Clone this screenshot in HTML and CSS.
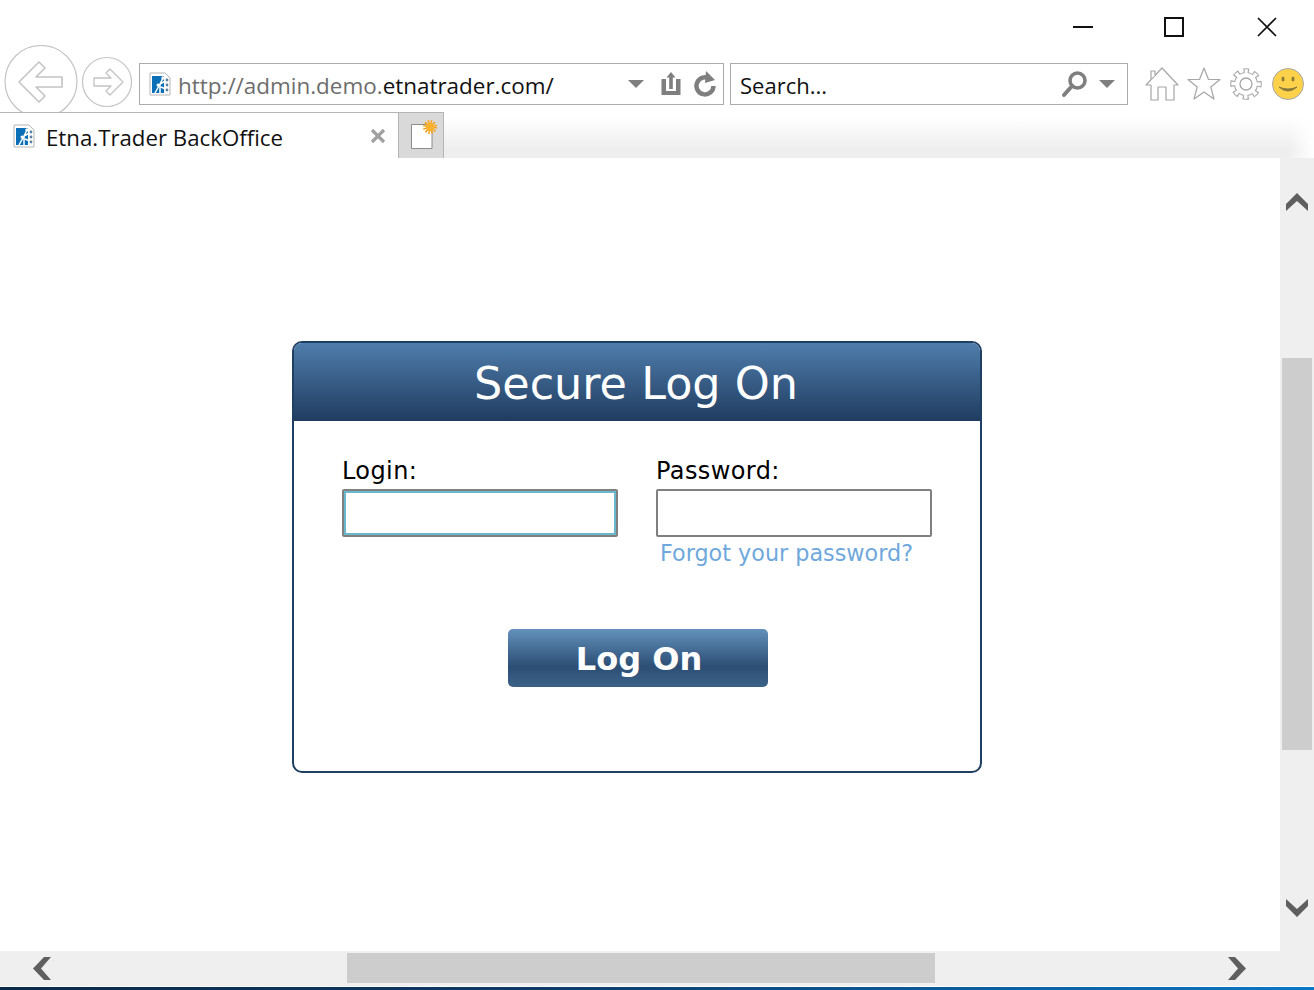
FILE: index.html
```html
<!DOCTYPE html>
<html lang="en">
<head>
<meta charset="UTF-8">
<title>Etna.Trader BackOffice</title>
<link rel="stylesheet" href="styles.css">
</head>
<body>
<svg class="defs" width="0" height="0">
  <symbol id="favicon" viewBox="0 0 22 24">
    <path d="M1 1H16L21 6V23H1Z" fill="#fff" stroke="#b5b5b5"/>
    <rect x="3" y="4" width="12" height="17" fill="#0b6fb8"/>
    <path d="M6 21L11 12L14 6M11 21L11 12L18 8M12 15L19 18" stroke="#fff" stroke-width="1.500" fill="none"/>
    <circle cx="14" cy="6" r="1.700" fill="#fff"/>
    <circle cx="9" cy="13" r="1.500" fill="#fff"/>
    <circle cx="18" cy="8" r="1.400" fill="#5a7f9f"/>
    <circle cx="18" cy="13" r="1.400" fill="#5a7f9f"/>
    <circle cx="18" cy="18" r="1.400" fill="#5a7f9f"/>
  </symbol>
</svg>

<!-- window buttons -->
<div class="titlebar">
  <svg class="win-btn win-min" width="20" height="20" viewBox="0 0 20 20"><path d="M0 10H20" stroke="#111" stroke-width="2"/></svg>
  <svg class="win-btn" width="20" height="20" viewBox="0 0 20 20"><rect x="1" y="1" width="18" height="18" fill="none" stroke="#111" stroke-width="2"/></svg>
  <svg class="win-btn" width="20" height="20" viewBox="0 0 20 20"><path d="M1 1L19 19M19 1L1 19" stroke="#111" stroke-width="1.7"/></svg>
</div>

<!-- browser toolbar -->
<div class="navbar">
  <svg class="back" width="74" height="74" viewBox="0 0 74 74">
    <circle cx="37" cy="36.500" r="36" fill="#fff" stroke="#c4c4c4" stroke-width="1.2"/>
    <path d="M15 37L35 17L41 23L32 32H58V42H32L41 51L35 57Z" fill="#fff" stroke="#c4c4c4" stroke-width="1.6" stroke-linejoin="round"/>
  </svg>
  <svg class="forward" width="52" height="52" viewBox="0 0 52 52">
    <circle cx="26" cy="26" r="24.5" fill="#fff" stroke="#c4c4c4" stroke-width="1.2"/>
    <path d="M13 22H30L25 17L29 13L42 26L29 39L25 35L30 30H13Z" fill="#fff" stroke="#c4c4c4" stroke-width="1.4" stroke-linejoin="round"/>
  </svg>
  <div class="address">
    <svg class="favicon" width="22" height="24"><use href="#favicon"/></svg>
    <span class="url"><span class="url-dim">http://admin.demo.</span>etnatrader.com/</span>
    <span class="caret caret-address"></span>
    <svg class="tool-share" width="20" height="24" viewBox="0 0 20 24">
      <path d="M10 0L14.500 5.500H11.800V17H8.200V5.500H5.500Z" fill="#7f7f7f"/>
      <path d="M0.500 7H5V19H15V7H19.500V23H0.500Z" fill="#7f7f7f"/>
    </svg>
    <svg class="tool-refresh" width="24" height="26" viewBox="0 0 24 26">
      <path d="M17 8A8.500 8.500 0 1 0 20.500 15" fill="none" stroke="#7f7f7f" stroke-width="4.500"/>
      <path d="M13 0L22 9L12 12Z" fill="#7f7f7f"/>
    </svg>
  </div>
  <div class="search">
    <span class="search-text">Search...</span>
    <svg class="search-icon" width="28" height="28" viewBox="0 0 28 28">
      <circle cx="16.500" cy="10.500" r="7.500" fill="none" stroke="#7f7f7f" stroke-width="3.600"/>
      <path d="M11 16L3 25" stroke="#7f7f7f" stroke-width="4" stroke-linecap="round"/>
    </svg>
    <span class="caret"></span>
  </div>
  <div class="tools">
    <svg class="tool-home" width="34" height="34" viewBox="0 0 34 34">
      <path d="M1 18L17 1L33 18L29 18V33H21V20H13V33H6V18Z" fill="#fff" stroke="#a6a6a6" stroke-width="1.200" stroke-linejoin="round"/>
      <path d="M6 12V4H10V8" fill="#fff" stroke="#a6a6a6" stroke-width="1.200"/>
    </svg>
    <svg class="tool-star" width="34" height="34" viewBox="0 0 34 34">
      <path d="M17 1L21.500 12.500H33L23.800 20L27 32L17 25L7 32L10.200 20L1 12.500H12.500Z" fill="#fff" stroke="#a6a6a6" stroke-width="1.200" stroke-linejoin="round"/>
    </svg>
    <svg class="tool-gear" width="32" height="32" viewBox="0 0 32 32">
      <circle cx="16" cy="16" r="12" fill="none" stroke="#a6a6a6" stroke-width="7.500" stroke-dasharray="5.400 4.025" stroke-dashoffset="2.700" transform="rotate(-90 16 16)"/>
      <circle cx="16" cy="16" r="11.500" fill="#fff" stroke="#a6a6a6" stroke-width="1.100"/>
      <circle cx="16" cy="16" r="12" fill="none" stroke="#fff" stroke-width="5.400" stroke-dasharray="3.400 6.025" stroke-dashoffset="1.700" transform="rotate(-90 16 16)"/>
      <circle cx="16" cy="16" r="6" fill="#fff" stroke="#a6a6a6" stroke-width="1.300"/>
    </svg>
    <svg class="tool-smile" width="32" height="32" viewBox="0 0 32 32">
      <circle cx="16" cy="16" r="15.500" fill="#fdd14a" stroke="#a8a8a8"/>
      <ellipse cx="11" cy="11" rx="1.500" ry="2.500" fill="#8a7a3a"/>
      <ellipse cx="21" cy="11" rx="1.500" ry="2.500" fill="#8a7a3a"/>
      <path d="M7 19Q16 27 25 19Q16 23 7 19Z" fill="#8a7a3a" stroke="#8a7a3a"/>
    </svg>
  </div>
</div>

<!-- tab strip -->
<div class="tabstrip">
  <div class="tab">
    <svg class="favicon" width="22" height="24"><use href="#favicon"/></svg>
    <span class="tab-title">Etna.Trader BackOffice</span>
    <svg class="tab-close" width="16" height="16" viewBox="0 0 16 16"><path d="M2 2L14 14M14 2L2 14" stroke="#a0a0a0" stroke-width="3.200"/></svg>
  </div>
  <div class="newtab">
    <svg class="newtab-icon" width="28" height="32" viewBox="0 0 28 32">
      <path d="M2.500 4.500H23V28.500H2.500Z" fill="#fff" stroke="#8c8c8c"/>
      <circle cx="21" cy="7" r="5.500" fill="none" stroke="#f9a11b" stroke-width="3" stroke-dasharray="1.440 1.440"/>
      <circle cx="21" cy="7" r="4.500" fill="#fbb12e"/>
    </svg>
  </div>
  <div class="tab-fill"></div>
</div>

<div class="viewport">
  <div class="page">
    <div class="logon">
      <div class="logon-head">Secure Log On</div>
      <form class="logon-body">
        <div class="fields">
          <div class="field">
            <label for="login">Login:</label>
            <input type="text" id="login" class="text-input text-input-focus">
          </div>
          <div class="field">
            <label for="password">Password:</label>
            <input type="password" id="password" class="text-input">
            <a class="forgot" href="#">Forgot your password?</a>
          </div>
        </div>
        <div class="actions">
          <input type="button" class="logon-btn" value="Log On">
        </div>
      </form>
    </div>
  </div>
  <div class="vscroll">
    <svg class="arrow-up" width="24" height="18" viewBox="0 0 24 18"><path d="M1 18V11L12 0L23 11V18L12 8Z" fill="#5f5f5f"/></svg>
    <div class="vthumb"></div>
    <svg class="arrow-down" width="24" height="18" viewBox="0 0 24 18"><path d="M1 0V7L12 18L23 7V0L12 10Z" fill="#5f5f5f"/></svg>
  </div>
</div>

<div class="hscroll">
  <svg class="arrow-left" width="18" height="23" viewBox="0 0 18 23"><path d="M18 0H11L0 11.500L11 23H18L8 11.500Z" fill="#5f5f5f"/></svg>
  <div class="hthumb"></div>
  <svg class="arrow-right" width="18" height="23" viewBox="0 0 18 23"><path d="M0 0H7L18 11.500L7 23H0L10 11.500Z" fill="#5f5f5f"/></svg>
</div>
<div class="taskbar-edge"></div>
</body>
</html>
```

FILE: styles.css
```css
html, body {
    margin: 0;
    padding: 0;
    height: 990px;
    overflow: hidden;
    background-color: #fff;
    font-family: "Open Sans", "Noto Sans", sans-serif;
}

.defs {
    display: block;
    height: 0;
}

/* Window buttons */
.titlebar {
    height: 45px;
    box-sizing: border-box;
    padding: 17px 37px 0 0;
    display: flex;
    justify-content: flex-end;
    gap: 73px;
}

.win-btn {
    display: block;
}

.win-min {
    margin-right: -2px;
}

/* Toolbar */
.navbar {
    height: 67px;
    display: flex;
    align-items: flex-start;
    overflow: hidden;
    box-sizing: border-box;
}

.back {
    flex: none;
    margin-left: 4px;
}

.forward {
    flex: none;
    margin: 11px 0 0 3px;
}

.address,
.search {
    height: 42px;
    margin-top: 18px;
    box-sizing: border-box;
    border: 1px solid #ababab;
    display: flex;
    align-items: center;
    flex: none;
    background-color: #fff;
}

.address {
    width: 585px;
    margin-left: 6px;
    padding-left: 9px;
}

.search {
    width: 398px;
    margin-left: 6px;
    padding-left: 9px;
}

.url {
    font-size: 22.450px;
    margin: 2px 0 0 7px;
    color: #111;
    white-space: nowrap;
    flex: 1;
}

.url-dim {
    color: #6d6d6d;
}

.caret {
    width: 0;
    height: 0;
    border-left: 8px solid transparent;
    border-right: 8px solid transparent;
    border-top: 8px solid #7f7f7f;
    flex: none;
}

.caret-address {
    margin-right: 17px;
}

.tool-share {
    flex: none;
    margin-right: 12px;
}

.tool-refresh {
    flex: none;
    margin-right: 6px;
}

.search-text {
    font-size: 22px;
    margin-top: 2px;
    color: #111;
    flex: 1;
}

.search-icon {
    flex: none;
    margin-right: 10px;
}

.search .caret {
    margin-right: 12px;
}

.tools {
    display: flex;
    align-items: center;
    margin: 22px 0 0 17px;
}

.tools svg {
    flex: none;
    display: block;
}

.tool-star {
    margin-left: 8px;
}

.tool-gear {
    margin-left: 9px;
}

.tool-smile {
    margin-left: 10px;
}

/* Tabs */
.tabstrip {
    height: 46px;
    display: flex;
    box-sizing: border-box;
}

.tab {
    width: 398px;
    box-sizing: border-box;
    border-top: 1px solid #b5b5b5;
    display: flex;
    align-items: center;
    padding: 0 12px 0 13px;
    flex: none;
}

.tab-title {
    font-size: 22.250px;
    margin-top: 4px;
    color: #111;
    margin-left: 11px;
    flex: 1;
    white-space: nowrap;
}

.tab-close {
    flex: none;
}

.newtab {
    width: 46px;
    box-sizing: border-box;
    flex: none;
    background-color: #d9d9d9;
    border: 1px solid #b5b5b5;
    border-bottom: none;
    padding: 7px 0 0 10px;
}

.newtab-icon {
    display: block;
}

.tab-fill {
    flex: 1;
    background: linear-gradient(to bottom, #fff 0, #fff 10%, #eee 80%, #efefef 100%);
    -webkit-mask-image: linear-gradient(to right, #000 97%, transparent 100%);
    mask-image: linear-gradient(to right, #000 97%, transparent 100%);
}

/* Page area */
.viewport {
    height: 793px;
    display: flex;
}

.page {
    flex: 1;
    box-sizing: border-box;
    padding: 183px 0 0 292px;
}

.logon {
    width: 690px;
    height: 432px;
    box-sizing: border-box;
    border: 2px solid #1f3f63;
    border-radius: 10px;
    overflow: hidden;
    font-family: "DejaVu Sans", Verdana, sans-serif;
}

.logon-head {
    height: 78px;
    line-height: 82px;
    padding-right: 2px;
    text-align: center;
    color: #fff;
    font-size: 44.500px;
    background: linear-gradient(to bottom, #4f7dab 0%, #1f3c60 100%);
}

.logon-body {
    padding: 33px 48px 0;
}

.fields {
    display: flex;
    gap: 38px;
}

.field {
    width: 276px;
}

.field label {
    display: block;
    font-size: 24px;
    line-height: 35px;
    color: #000;
    letter-spacing: 0.4px;
}

.text-input {
    display: block;
    width: 276px;
    height: 48px;
    margin: 0;
    padding: 0;
    box-sizing: border-box;
    border: 2px solid #808080;
    border-radius: 2px;
    background-color: #fff;
    outline: none;
}

.text-input-focus {
    box-shadow: inset 0 0 0 2px #6bb8cc;
}

.forgot {
    display: block;
    margin: 1px 0 0 4px;
    font-size: 22.300px;
    line-height: 30px;
    color: #6fa8dc;
    text-decoration: none;
    white-space: nowrap;
}

.actions {
    margin: 61px 0 0 166px;
}

.logon-btn {
    display: block;
    width: 260px;
    height: 58px;
    padding: 2px 0 0 2px;
    border: none;
    border-radius: 5px;
    color: #fff;
    font-family: "DejaVu Sans", Verdana, sans-serif;
    font-size: 32px;
    font-weight: bold;
    cursor: pointer;
    background: linear-gradient(to bottom, #6391bb 0%, #2c4e75 65%, #3c6288 100%);
}

/* Scrollbars */
.vscroll {
    width: 34px;
    flex: none;
    box-sizing: border-box;
    background-color: #efefef;
    padding: 35px 2px 0;
    display: flex;
    flex-direction: column;
    align-items: center;
}

.arrow-up {
    flex: none;
}

.vthumb {
    flex: none;
    width: 30px;
    height: 392px;
    margin-top: 147px;
    background-color: #cdcdcd;
}

.arrow-down {
    flex: none;
    margin-top: 149px;
}

.hscroll {
    height: 35px;
    background-color: #efefef;
    box-sizing: border-box;
    display: flex;
    align-items: flex-start;
    padding: 2px 0 0 33px;
}

.arrow-left {
    flex: none;
    margin-top: 4px;
}

.hthumb {
    flex: none;
    width: 588px;
    height: 30px;
    margin-left: 296px;
    background-color: #cdcdcd;
}

.arrow-right {
    flex: none;
    margin: 4px 0 0 293px;
}

.taskbar-edge {
    height: 3px;
    margin-top: 1px;
    background: linear-gradient(to right, #0b2a4a 0%, #0d3a66 40%, #0b6db5 90%, #0a78c8 100%);
}
```
